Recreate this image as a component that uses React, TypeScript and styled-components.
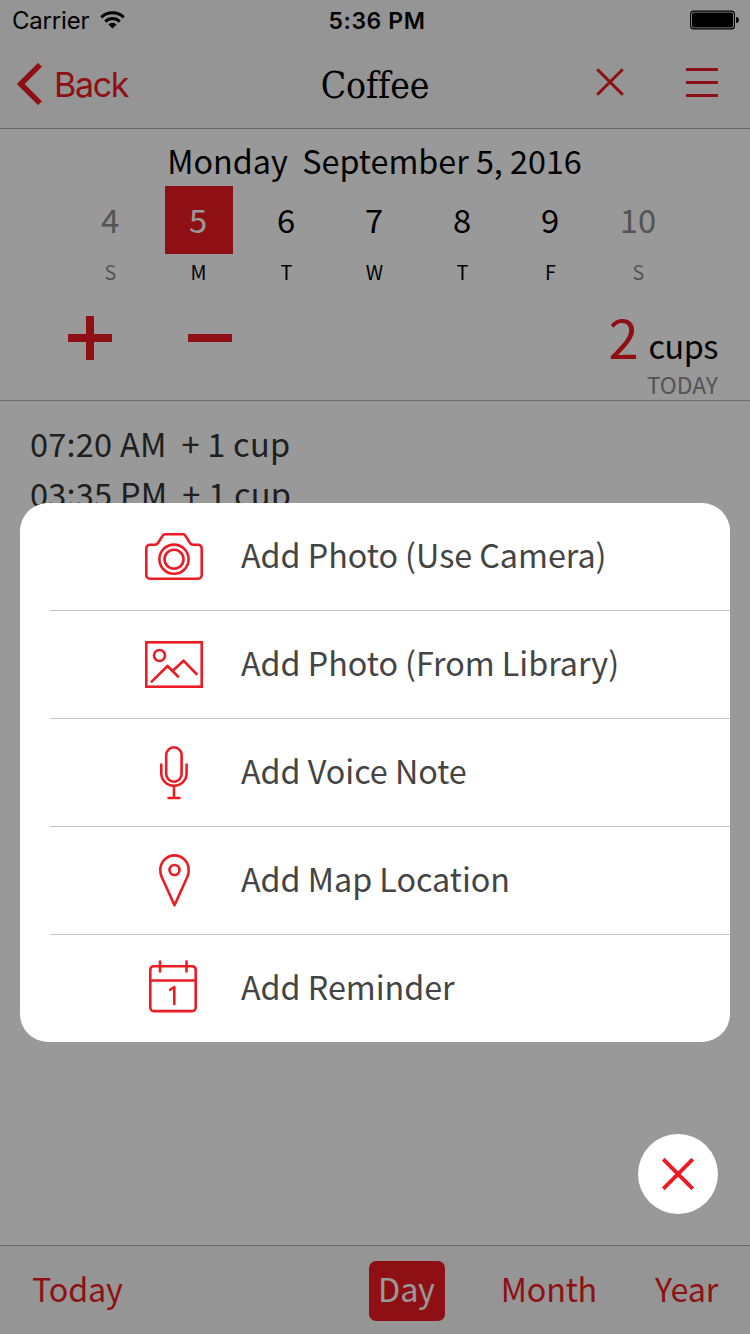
import React from "react";
import styled, { createGlobalStyle } from "styled-components";

const RED = "#ed1c24";
const SANS = `"Noto Sans CJK SC", "Open Sans", sans-serif`;
const SYSTEM = `Inter, Roboto, sans-serif`;

const GlobalStyle = createGlobalStyle`
  * { box-sizing: border-box; }
  html, body { margin: 0; padding: 0; }
  body { width: 750px; height: 1334px; overflow: hidden; background: #fff; }
  button { font: inherit; letter-spacing: inherit; color: inherit; background: none; border: 0; padding: 0; margin: 0; }
  svg { display: block; }
`;

const Screen = styled.div`
  position: relative;
  display: flex;
  flex-direction: column;
  width: 750px;
  height: 1334px;
  overflow: hidden;
  background: #fff;
  color: #000;
  font-family: ${SANS};
  font-size: 32.3px;
  line-height: 48px;
  white-space: pre;
`;

const Header = styled.header`
  height: 129px;
  flex: none;
  background: #f8f8f8;
  border-bottom: 1px solid #b0b0b0;
`;

const StatusBar = styled.div`
  display: grid;
  grid-template-columns: 1fr auto 1fr;
  align-items: center;
  height: 40px;
  padding: 0 10px 0 12px;
  font-family: ${SYSTEM};
  font-size: 24px;
  line-height: 38px;
`;

const CarrierGroup = styled.div`
  display: flex;
  align-items: center;
  gap: 11px;
  padding-top: 2px;
  letter-spacing: -0.2px;
  svg { margin-top: -2px; }
`;

const Clock = styled.div`
  font-weight: 600;
  font-size: 23px;
  letter-spacing: 0.6px;
  padding: 2px 0 0 2px;
`;

const BatterySlot = styled.div`
  display: flex;
  justify-content: flex-end;
`;

const NavBar = styled.nav`
  display: grid;
  grid-template-columns: 1fr auto 1fr;
  height: 88px;
`;

const BackButton = styled.button`
  display: flex;
  align-items: flex-start;
  gap: 11px;
  padding: 23px 0 0 16px;
  color: ${RED};
  font-family: ${SYSTEM};
  font-size: 34px;
  line-height: 44px;
  letter-spacing: -1.3px;
`;

const Title = styled.h1`
  margin: 0;
  padding-top: 22px;
  font-family: "DejaVu Serif Condensed", "DejaVu Serif", serif;
  font-stretch: condensed;
  font-weight: 400;
  font-size: 37px;
  line-height: 48px;
  letter-spacing: -0.2px;
`;

const NavActions = styled.div`
  display: flex;
  justify-content: flex-end;
  align-items: flex-start;
  gap: 62.500px;
  padding: 28px 32px 0 0;
`;

const DayPanel = styled.section`
  height: 272px;
  flex: none;
  border-bottom: 1px solid #b6b6b6;
`;

const DateLine = styled.div`
  height: 57px;
  padding: 7px 1px 0 0;
  text-align: center;
`;

const Week = styled.div`
  display: grid;
  grid-template-columns: repeat(7, 88px);
  padding-left: 66px;
`;

const Day = styled.div<{ $muted?: boolean }>`
  display: flex;
  flex-direction: column;
  align-items: center;
  color: ${(p) => (p.$muted ? "#8c8c8c" : "#000")};
`;

const DayNumber = styled.div<{ $active?: boolean }>`
  width: 68px;
  height: 68px;
  margin-left: 2px;
  padding: 0 2px 2px 0;
  text-align: center;
  font-size: 32.8px;
  line-height: 66px;
  background: ${(p) => (p.$active ? RED : "transparent")};
  color: ${(p) => (p.$active ? "#fff" : "inherit")};
`;

const DayLetter = styled.div`
  padding: 4px 0 0 1px;
  font-size: 19.8px;
  line-height: 28px;
`;

const Counter = styled.div`
  display: flex;
  justify-content: space-between;
  padding: 30px 32px 0 68px;
`;

const Steppers = styled.div`
  display: flex;
  gap: 76px;
`;

const Total = styled.div`
  display: flex;
  flex-direction: column;
  align-items: flex-end;
  padding-top: 1px;
`;

const Amount = styled.div`
  display: flex;
  align-items: baseline;
  gap: 10px;
  height: 53px;
  letter-spacing: -0.4px;
  line-height: 38px;
`;

const AmountValue = styled.span`
  color: ${RED};
  font-size: 54.5px;
`;

const AmountCaption = styled.span`
  color: #8c8c8c;
  font-size: 22.9px;
  line-height: 28px;
`;

const Log = styled.ul`
  flex: 1;
  margin: 0;
  padding: 17px 30px;
  list-style: none;
  color: #353535;
`;

const LogEntry = styled.li`
  height: 50px;
  font-size: 32.6px;
  line-height: 50px;
  letter-spacing: 0.2px;
`;

const TabBar = styled.footer`
  display: flex;
  align-items: center;
  justify-content: space-between;
  height: 89px;
  flex: none;
  padding: 1px 32px 0;
  background: #f8f8f8;
  border-top: 1px solid #b0b0b0;
  color: ${RED};
  letter-spacing: -0.2px;
`;

const TabGroup = styled.div`
  display: flex;
  align-items: center;
`;

const Tab = styled.button<{ $active?: boolean; $gap?: number }>`
  height: 60px;
  padding: ${(p) => (p.$active ? "0 10.500px 5px 9px" : "0 0 5px")};
  margin-left: ${(p) => p.$gap ?? 0}px;
  line-height: 55px;
  border-radius: 7px;
  background: ${(p) => (p.$active ? RED : "transparent")};
  color: ${(p) => (p.$active ? "#fff" : RED)};
`;

const Dim = styled.div`
  position: absolute;
  inset: 0;
  background: rgba(0, 0, 0, 0.4);
`;

const Sheet = styled.div`
  position: absolute;
  left: 20px;
  right: 20px;
  top: 503px;
  padding-left: 30px;
  border-radius: 28px;
  background: #fff;
  overflow: hidden;
`;

const SheetRow = styled.button`
  display: grid;
  grid-template-columns: 58px 1fr;
  column-gap: 38px;
  width: 100%;
  height: 108px;
  padding-left: 95px;
  text-align: left;
  color: #444;
  letter-spacing: -0.03px;
  border-bottom: 1px solid #c8c7cc;
  &:last-child { height: 107px; border-bottom: 0; }
`;

const RowIcon = styled.span`
  display: flex;
  align-items: center;
  justify-content: center;
  height: 107px;
`;

const RowLabel = styled.span`
  line-height: 102px;
`;

const CloseButton = styled.button`
  position: absolute;
  right: 32px;
  bottom: 120px;
  display: grid;
  place-items: center;
  width: 80px;
  height: 80px;
  border-radius: 50%;
  background: #fff;
`;

const stroke = { fill: "none", stroke: RED, strokeWidth: 2.6, strokeLinecap: "round", strokeLinejoin: "round" } as const;

const Wifi = () => (
  <svg width="25" height="18" viewBox="0 0 25 18" fill="none" stroke="#000" strokeWidth="3">
    <path d="M1.3 6.4a15.8 15.8 0 0 1 22.4 0" />
    <path d="M5.3 10.6a10.2 10.2 0 0 1 14.4 0" />
    <path d="M12.5 17.6 8.4 13.5a5.8 5.8 0 0 1 8.2 0z" fill="#000" stroke="none" />
  </svg>
);

const Battery = () => (
  <svg width="50" height="20" viewBox="0 0 50 20">
    <rect x="0.6" y="1.1" width="43.8" height="17.8" rx="3" fill="none" stroke="#000" strokeWidth="1.1" />
    <rect x="2" y="2.5" width="41" height="15" rx="1.8" />
    <path d="M46 7c2 .3 2.900 1.300 2.900 3s-.9 2.700-2.900 3z" />
  </svg>
);

const Chevron = () => (
  <svg width="27" height="42" viewBox="0 0 27 42" fill="none" stroke={RED} strokeWidth="5.5">
    <path d="M24 1.900 4.700 21 24 40.100" />
  </svg>
);

const Cross = ({ size, weight }: { size: number; weight: number }) => (
  <svg width={size} height={size} viewBox={`0 0 ${size} ${size}`} stroke={RED} strokeWidth={weight}>
    <path d={`M1.200 1.200 ${size - 1.2} ${size - 1.2}M${size - 1.2} 1.200 1.200 ${size - 1.2}`} />
  </svg>
);

const Bars = () => (
  <svg width="32" height="29" viewBox="0 0 32 29" fill={RED}>
    <path d="M0 0h32v3H0zM0 13h32v3H0zM0 26h32v3H0z" />
  </svg>
);

const Plus = () => (
  <svg width="44" height="44" viewBox="0 0 44 44" fill={RED}>
    <path d="M18 0h8v18h18v8H26v18h-8V26H0v-8h18z" />
  </svg>
);

const Minus = () => (
  <svg width="44" height="44" viewBox="0 0 44 44" fill={RED}>
    <path d="M0 18h44v8H0z" />
  </svg>
);

const CameraIcon = () => (
  <svg width="58" height="48" viewBox="0 0 58 48" {...stroke}>
    <path d="M4.800 11.800H10c1.600 0 2.300-.6 3-1.800l4.300-6.900c.7-1.200 1.400-1.800 2.700-1.800h18c1.300 0 2 .6 2.700 1.800l4.300 6.900c.7 1.200 1.400 1.800 3 1.800h5.200a3.500 3.500 0 0 1 3.500 3.500v26.900a3.500 3.500 0 0 1-3.500 3.500H4.800a3.500 3.500 0 0 1-3.500-3.500V15.300a3.500 3.500 0 0 1 3.500-3.500z" />
    <circle cx="29" cy="26.200" r="14.600" />
    <circle cx="29" cy="26.200" r="9.500" />
  </svg>
);

const PictureIcon = () => (
  <svg width="58" height="47" viewBox="0 0 58 47" {...stroke}>
    <rect x="1.300" y="1.300" width="55.400" height="44.400" strokeLinejoin="miter" />
    <circle cx="14.500" cy="14.500" r="5.500" />
    <path d="M6.700 40.700 22.500 25 33 35.500M27.500 30 38.500 19.700 51.500 33" />
  </svg>
);

const MicIcon = () => (
  <svg width="29" height="54" viewBox="0 0 29 54" {...stroke}>
    <rect x="6.200" y="1.300" width="15.400" height="34.400" rx="7.700" />
    <path d="M1.300 18.500v8.700a12.650 12.650 0 0 0 25.300 0v-8.700M14 40v12M8.500 52h11" />
  </svg>
);

const PinIcon = () => (
  <svg width="31" height="54" viewBox="0 0 31 54" {...stroke}>
    <path d="M15.500 51.200 2.500 22.500C1.600 20.500 1.300 18.500 1.300 16.100a14.200 14.700 0 0 1 28.400 0c0 2.400-.3 4.400-1.200 6.400z" />
    <circle cx="15.500" cy="16" r="5" />
  </svg>
);

const CalendarIcon = () => (
  <svg width="50" height="57" viewBox="0 0 50 57" {...stroke}>
    <path d="M11 6.200H4.800a3.500 3.500 0 0 0-3.500 3.500v37.900a3.500 3.500 0 0 0 3.500 3.500h38.400a3.500 3.500 0 0 0 3.500-3.500V9.700a3.500 3.500 0 0 0-3.500-3.500H37.500M11 6.200h26.500M1.300 20.500h45.400M11 1.500V11.500M37.500 1.500V11.500" />
    <path d="M21.200 29.800 25.300 27v17" />
  </svg>
);

const week = [
  { n: "4", d: "S", muted: true },
  { n: "5", d: "M", active: true },
  { n: "6", d: "T" },
  { n: "7", d: "W" },
  { n: "8", d: "T" },
  { n: "9", d: "F" },
  { n: "10", d: "S", muted: true },
];

const entries = ["07:20 AM  + 1 cup", "03:35 PM  + 1 cup"];

const actions = [
  { label: "Add Photo (Use Camera)", Icon: CameraIcon },
  { label: "Add Photo (From Library)", Icon: PictureIcon },
  { label: "Add Voice Note", Icon: MicIcon },
  { label: "Add Map Location", Icon: PinIcon },
  { label: "Add Reminder", Icon: CalendarIcon },
];

export default function App() {
  return (
    <>
      <GlobalStyle />
      <Screen>
        <Header>
          <StatusBar>
            <CarrierGroup>Carrier<Wifi /></CarrierGroup>
            <Clock>5:36 PM</Clock>
            <BatterySlot><Battery /></BatterySlot>
          </StatusBar>
          <NavBar>
            <BackButton><Chevron />Back</BackButton>
            <Title>Coffee</Title>
            <NavActions>
              <Cross size={28} weight={3} />
              <Bars />
            </NavActions>
          </NavBar>
        </Header>
        <DayPanel>
          <DateLine>Monday  September 5, 2016</DateLine>
          <Week>
            {week.map((day) => (
              <Day key={day.n} $muted={day.muted}>
                <DayNumber $active={day.active}>{day.n}</DayNumber>
                <DayLetter>{day.d}</DayLetter>
              </Day>
            ))}
          </Week>
          <Counter>
            <Steppers><Plus /><Minus /></Steppers>
            <Total>
              <Amount><AmountValue>2</AmountValue>cups</Amount>
              <AmountCaption>TODAY</AmountCaption>
            </Total>
          </Counter>
        </DayPanel>
        <Log>
          {entries.map((entry) => <LogEntry key={entry}>{entry}</LogEntry>)}
        </Log>
        <TabBar>
          <Tab>Today</Tab>
          <TabGroup>
            <Tab $active>Day</Tab>
            <Tab $gap={55.5}>Month</Tab>
            <Tab $gap={58}>Year</Tab>
          </TabGroup>
        </TabBar>
        <Dim />
        <Sheet>
          {actions.map(({ label, Icon }) => (
            <SheetRow key={label}>
              <RowIcon><Icon /></RowIcon>
              <RowLabel>{label}</RowLabel>
            </SheetRow>
          ))}
        </Sheet>
        <CloseButton><Cross size={32} weight={4} /></CloseButton>
      </Screen>
    </>
  );
}
